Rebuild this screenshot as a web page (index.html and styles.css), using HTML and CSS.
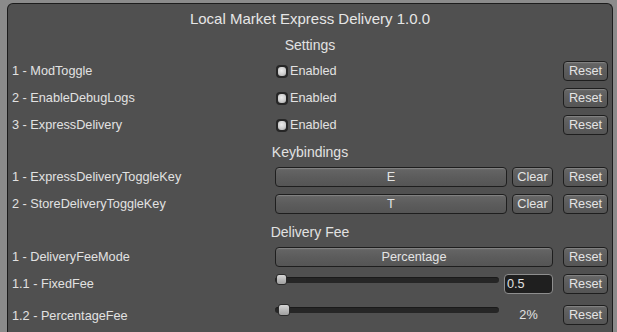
FILE: index.html
```html
<!DOCTYPE html>
<html>
<head>
<meta charset="utf-8">
<link rel="stylesheet" href="styles.css">
</head>
<body>
<div class="window">
  <div class="title">Local Market Express Delivery 1.0.0</div>

  <div class="header h-settings">Settings</div>
  <div class="row r-first">
    <div class="label">1 - ModToggle</div>
    <div class="control"><span class="toggle"><span class="dot"></span></span><span class="tlabel">Enabled</span></div>
    <button class="btn reset">Reset</button>
  </div>
  <div class="row">
    <div class="label">2 - EnableDebugLogs</div>
    <div class="control"><span class="toggle"><span class="dot"></span></span><span class="tlabel">Enabled</span></div>
    <button class="btn reset">Reset</button>
  </div>
  <div class="row">
    <div class="label">3 - ExpressDelivery</div>
    <div class="control"><span class="toggle"><span class="dot"></span></span><span class="tlabel">Enabled</span></div>
    <button class="btn reset">Reset</button>
  </div>

  <div class="header h-keys">Keybindings</div>
  <div class="row r-key1">
    <div class="label">1 - ExpressDeliveryToggleKey</div>
    <div class="control"><button class="btn key">E</button><button class="btn clear">Clear</button></div>
    <button class="btn reset">Reset</button>
  </div>
  <div class="row">
    <div class="label">2 - StoreDeliveryToggleKey</div>
    <div class="control"><button class="btn key">T</button><button class="btn clear">Clear</button></div>
    <button class="btn reset">Reset</button>
  </div>

  <div class="header h-fee">Delivery Fee</div>
  <div class="row r-mode">
    <div class="label">1 - DeliveryFeeMode</div>
    <div class="control"><button class="btn wide">Percentage</button></div>
    <button class="btn reset">Reset</button>
  </div>
  <div class="row">
    <div class="label">1.1 - FixedFee</div>
    <div class="control">
      <div class="slider"><div class="track"></div><div class="thumb" style="left:1px"></div></div>
      <div class="textbox">0.5</div>
    </div>
    <button class="btn reset">Reset</button>
  </div>
  <div class="row r-pct">
    <div class="label">1.2 - PercentageFee</div>
    <div class="control">
      <div class="slider"><div class="track"></div><div class="thumb thumb-b" style="left:3px"></div></div>
      <div class="value">2%</div>
    </div>
    <button class="btn reset">Reset</button>
  </div>
</div>
</body>
</html>
```
FILE: styles.css
```css
html, body {
  margin: 0;
  padding: 0;
  background: #8b8b8b;
  overflow: hidden;
  height: 332px;
}
body {
  padding: 3px 0 0 7px;
  box-sizing: border-box;
  font-family: "Liberation Sans", Arial, sans-serif;
  color: #e2e2e2;
}
.window {
  width: 596px;
  height: 324px;
  background: #505050;
  border: 1px solid #1c1c1c;
  border-bottom: 0;
  border-radius: 6px 6px 0 0;
  padding: 5px 4px 0 4px;
  box-sizing: content-box;
  display: flex;
  flex-direction: column;
  overflow: hidden;
}
.title {
  height: 20px;
  line-height: 20px;
  text-align: center;
  font-size: 15px;
  color: #e6e6e6;
  flex: none;
}
.header {
  height: 20px;
  line-height: 20px;
  text-align: center;
  font-size: 14px;
  color: #e2e2e2;
  flex: none;
}
.h-settings { margin-top: 6px; }
.h-keys { margin-top: 7px; }
.h-fee { margin-top: 8px; }
.row {
  display: flex;
  align-items: center;
  height: 20px;
  margin-top: 7px;
  flex: none;
}
.r-first { margin-top: 6px; }
.r-key1 { margin-top: 5px; }
.r-mode { margin-top: 5px; }
.r-pct { margin-top: 10px; height: 22px; align-items: flex-end; }
.r-pct .label { align-self: center; margin-top: 2px; }
.label {
  width: 263px;
  font-size: 12.7px;
  white-space: nowrap;
  flex: none;
}
.control {
  width: 278px;
  height: 100%;
  display: flex;
  align-items: center;
  flex: none;
}
.btn {
  font-family: "Liberation Sans", Arial, sans-serif;
  font-size: 12.7px;
  color: #e4e4e4;
  height: 20px;
  padding: 0;
  border: 1px solid #1e1e1e;
  border-radius: 4px;
  background: linear-gradient(#737373 0, #646464 2px, #5c5c5c 50%, #555555 100%);
  box-shadow: inset 0 1px 0 rgba(255,255,255,0.12);
  box-sizing: border-box;
  line-height: 17px;
  text-align: center;
}
.reset {
  width: 45px;
  margin-left: 10px;
  flex: none;
}
.key {
  width: 232px;
}
.clear {
  width: 41px;
  margin-left: 5px;
}
.wide {
  width: 278px;
}
.toggle {
  width: 12px;
  height: 13px;
  margin-left: 1px;
  border-radius: 4px;
  background: #262626;
  display: flex;
  align-items: center;
  justify-content: center;
  flex: none;
}
.dot {
  width: 8px;
  height: 9px;
  border-radius: 3px;
  background: radial-gradient(circle at 45% 40%, #ececec 0, #cdcdcd 55%, #a0a0a0 100%);
}
.tlabel {
  margin-left: 2px;
  font-size: 12.7px;
}
.slider {
  position: relative;
  width: 224px;
  height: 12px;
  align-self: flex-start;
  flex: none;
}
.track {
  position: absolute;
  left: 0;
  right: 0;
  top: 3px;
  height: 6px;
  border-radius: 3px;
  background: #262626;
  border-top: 1px solid #1a1a1a;
  box-sizing: border-box;
}
.thumb {
  position: absolute;
  top: 0;
  width: 11px;
  height: 11px;
  box-sizing: border-box;
  border: 1px solid #2a2a2a;
  border-radius: 3px;
  background: linear-gradient(#d6d6d6, #b4b4b4 60%, #a0a0a0);
}
.thumb-b {
  width: 12px;
  height: 12px;
}
.textbox {
  width: 49px;
  height: 20px;
  margin-left: 5px;
  box-sizing: border-box;
  border: 1px solid #8e8e8e;
  border-radius: 4px;
  background: #1f1f1f;
  font-size: 12.7px;
  line-height: 18px;
  padding-left: 2px;
  color: #e2e2e2;
}
.value {
  width: 49px;
  margin-left: 5px;
  text-align: center;
  font-size: 12.7px;
  align-self: flex-end;
  line-height: 20px;
  margin-bottom: 1px;
}
.r-pct .control { height: 22px; }
.r-pct .slider { align-self: flex-start; }
.r-pct .reset { align-self: flex-end; margin-bottom: 1px; }
```
